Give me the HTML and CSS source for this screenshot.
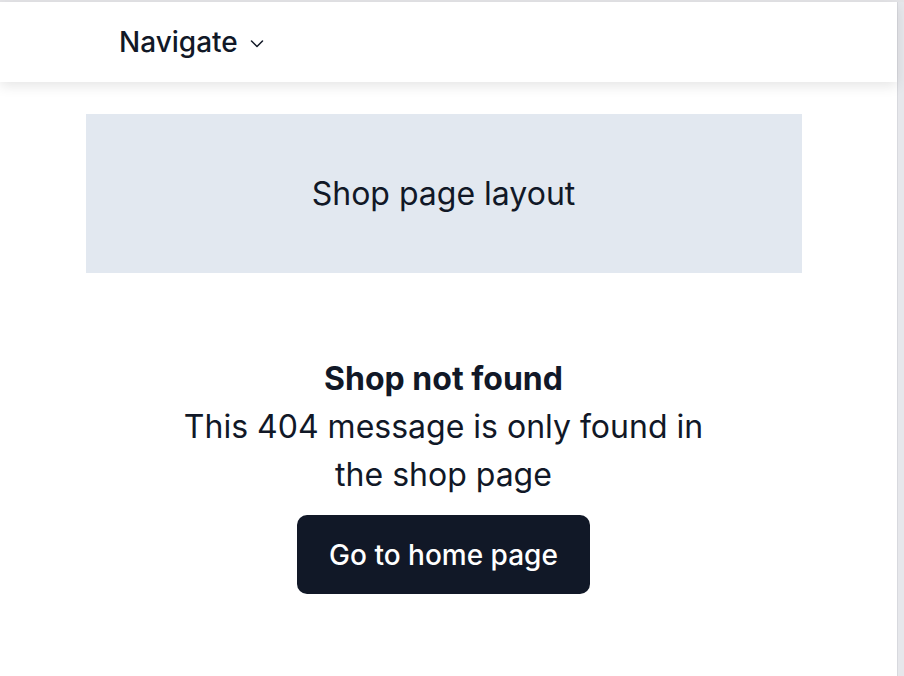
FILE: index.html
```html
<!DOCTYPE html>
<html lang="en">
<head>
<meta charset="utf-8">
<title>Shop not found</title>
<link rel="stylesheet" href="styles.css">
</head>
<body>
<div class="frame">
  <div class="page">
    <header class="header">
      <button class="nav-toggle" type="button">
        <span>Navigate</span>
        <svg class="chevron" width="14" height="10" viewBox="0 0 14 10" aria-hidden="true">
          <path d="M1.5 2 L7 7.5 L12.5 2" fill="none" stroke="#111827" stroke-width="1.5" stroke-linecap="round" stroke-linejoin="round"/>
        </svg>
      </button>
    </header>
    <main class="main">
      <section class="layout-banner">Shop page layout</section>
      <section class="not-found">
        <h1 class="nf-title">Shop not found</h1>
        <p class="nf-text">This 404 message is only found in the shop page</p>
        <a class="nf-button" href="#">Go to home page</a>
      </section>
    </main>
  </div>
  <div class="edge"></div>
</div>
</body>
</html>
```

FILE: styles.css
```css
* { box-sizing: border-box; }
html, body { margin: 0; padding: 0; height: 100%; }
body {
  font-family: Inter, "Noto Sans", sans-serif;
  color: #111827;
  background: #ffffff;
  overflow: hidden;
}
.frame {
  display: flex;
  height: 676px;
  border-top: 2px solid #e4e4e7;
}
.page {
  flex: 1;
  min-width: 0;
  background: #ffffff;
  display: flex;
  flex-direction: column;
}
.edge {
  width: 7px;
  background: #e6e7eb;
  border-left: 1px solid #d8d9de;
}
.header {
  height: 80px;
  display: flex;
  align-items: center;
  padding-left: 119px;
  background: #fff;
  box-shadow: 0 4px 12px rgba(0,0,0,0.10);
  position: relative;
  z-index: 1;
}
.nav-toggle {
  display: flex;
  align-items: center;
  gap: 12px;
  border: 0;
  background: none;
  padding: 0;
  font-family: inherit;
  font-size: 28px;
  font-weight: 500;
  color: #111827;
  cursor: pointer;
}
.chevron { margin-top: 4px; }
.main {
  display: flex;
  flex-direction: column;
  align-items: center;
  padding-top: 32px;
  padding-right: 10px;
}
.layout-banner {
  width: 716px;
  height: 159px;
  background: #e2e8f0;
  display: flex;
  align-items: center;
  justify-content: center;
  font-size: 32px;
}
.not-found {
  margin-top: 82px;
  display: flex;
  flex-direction: column;
  align-items: center;
  text-align: center;
  width: 600px;
}
.nf-title {
  margin: 0;
  font-size: 32px;
  font-weight: 700;
  line-height: 48px;
}
.nf-text {
  margin: 0;
  font-size: 32px;
  line-height: 48px;
  max-width: 540px;
}
.nf-button {
  margin-top: 16px;
  display: inline-flex;
  align-items: center;
  justify-content: center;
  padding: 0 32px;
  height: 79px;
  background: #111827;
  color: #fff;
  border-radius: 10px;
  font-size: 28px;
  font-weight: 500;
  text-decoration: none;
}
```
